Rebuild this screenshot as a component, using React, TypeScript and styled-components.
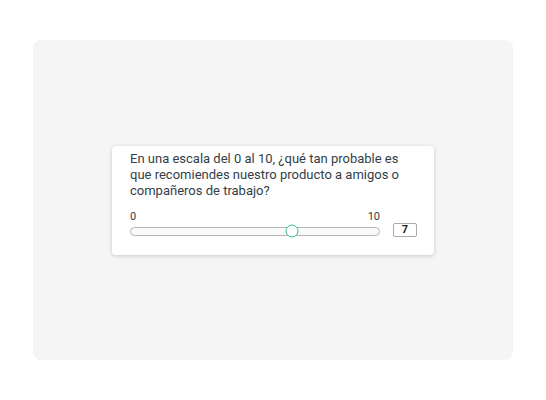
import styled, { createGlobalStyle } from "styled-components";

const GlobalStyle = createGlobalStyle`
  body {
    margin: 0;
    background: #ffffff;
    font-family: Roboto, "Noto Sans", sans-serif;
  }
`;

const Panel = styled.div`
  margin: 40px 0 0 33px;
  width: 480px;
  height: 320px;
  background: #f5f5f5;
  border-radius: 8px;
  display: flex;
  align-items: center;
  justify-content: center;
`;

const Card = styled.div`
  width: 322px;
  box-sizing: border-box;
  padding: 5px 17px 18px 18px;
  background: #ffffff;
  border-radius: 4px;
  box-shadow: 0 1px 4px rgba(0, 0, 0, 0.18);
`;

const Question = styled.p`
  margin: 0;
  font-size: 13px;
  line-height: 16px;
  color: #333e48;
`;

const SliderRow = styled.div`
  display: flex;
  align-items: flex-end;
  gap: 13px;
  margin-top: 12px;
`;

const SliderArea = styled.div`
  flex: 1;
`;

const Labels = styled.div`
  display: flex;
  justify-content: space-between;
  font-size: 11px;
  line-height: 12px;
  color: #333e48;
  margin-bottom: 4px;
`;

const Track = styled.div`
  position: relative;
  height: 7px;
  border: 1px solid #b5b5b5;
  border-radius: 5px;
  background: #fafafa;
  margin-bottom: 1px;
`;

const Thumb = styled.div`
  position: absolute;
  top: 50%;
  width: 11px;
  height: 11px;
  border: 1.5px solid #2fbf8a;
  border-radius: 50%;
  background: #ffffff;
  transform: translate(-50%, -50%);
`;

const ValueBox = styled.div`
  width: 24px;
  height: 14px;
  box-sizing: border-box;
  border: 1px solid #a9a9a9;
  border-radius: 2px;
  display: flex;
  align-items: center;
  justify-content: center;
  font-size: 11px;
  font-weight: 700;
  color: #222;
`;

export default function App() {
  const value = 7;
  const max = 10;
  return (
    <>
      <GlobalStyle />
      <Panel>
        <Card>
          <Question>
            En una escala del 0 al 10, ¿qué tan probable es que recomiendes
            nuestro producto a amigos o compañeros de trabajo?
          </Question>
          <SliderRow>
            <SliderArea>
              <Labels>
                <span>0</span>
                <span>10</span>
              </Labels>
              <Track>
                <Thumb style={{ left: `${(value / max) * 92 + 0.6}%` }} />
              </Track>
            </SliderArea>
            <ValueBox>{value}</ValueBox>
          </SliderRow>
        </Card>
      </Panel>
    </>
  );
}
